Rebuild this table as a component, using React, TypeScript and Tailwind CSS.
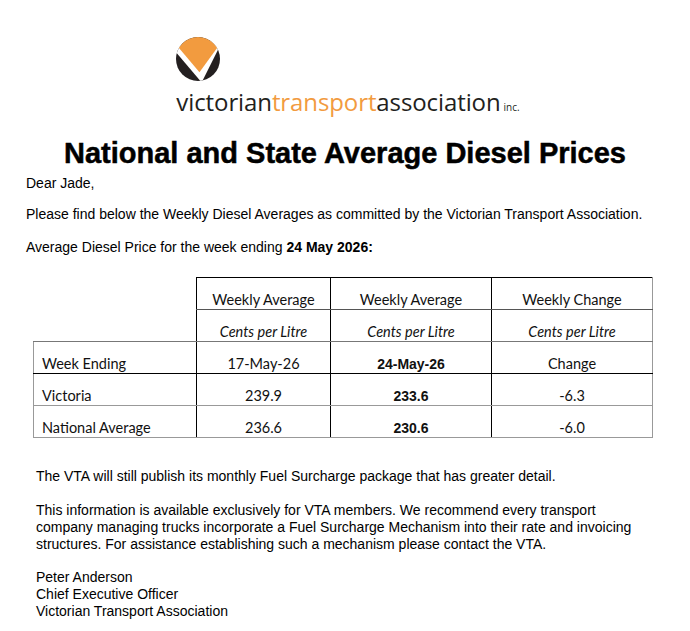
import React from "react";

const ARIAL = { fontFamily: '"Liberation Sans", Arial, sans-serif' };

function Logo() {
  return (
    <div className="flex justify-center pl-[6px]">
      <div className="flex flex-col items-start">
        <svg width="44" height="44" viewBox="0 0 120 120" className="block">
          <defs>
            <clipPath id="vta-circle">
              <circle cx="60" cy="60" r="60" />
            </clipPath>
          </defs>
          <g clipPath="url(#vta-circle)">
            <rect width="120" height="120" fill="#231f20" />
            <polygon points="-10,30 70,124 130,4" fill="#ffffff" />
            <polygon points="-10,0 130,0 130,5 64,96 -10,9" fill="#f29b3f" />
          </g>
        </svg>
        <div
          className="mt-[7px] flex items-baseline text-[24px] leading-[28px] tracking-[-0.1px] text-[#231f20]"
          style={{ fontFamily: '"Open Sans", sans-serif' }}
        >
          <span>victorian</span>
          <span className="text-[#f29b3f]">transport</span>
          <span>association</span>
          <span className="ml-[3px] text-[10px] tracking-normal">inc.</span>
        </div>
      </div>
    </div>
  );
}

export default function App() {
  const rows = [
    { label: "Week Ending", prev: "17-May-26", curr: "24-May-26", change: "Change" },
    { label: "Victoria", prev: "239.9", curr: "233.6", change: "-6.3" },
    { label: "National Average", prev: "236.6", curr: "230.6", change: "-6.0" },
  ];

  return (
    <div className="min-h-screen w-[690px] bg-white pt-[37px] text-black" style={ARIAL}>
      <Logo />

      <h1 className="mt-[15px] text-center text-[29px] font-bold leading-[34px] [-webkit-text-stroke:0.5px_black]">
        National and State Average Diesel Prices
      </h1>

      <div className="mt-[5px] pl-[26px] text-[14px] leading-[16px]">
        <p>Dear Jade,</p>
        <p className="mt-[15px]">
          Please find below the Weekly Diesel Averages as committed by the Victorian Transport Association.
        </p>
        <p className="mt-[17px]">
          Average Diesel Price for the week ending <b>24 May 2026:</b>
        </p>
      </div>

      <table
        className="ml-[33px] mt-[22px] border-collapse text-[14.5px] leading-[16px] text-[#111]"
        style={{ fontFamily: "Lato, sans-serif" }}
      >
        <colgroup>
          <col className="w-[163px]" />
          <col className="w-[134px]" />
          <col className="w-[161px]" />
          <col className="w-[161px]" />
        </colgroup>
        <tbody>
          <tr className="h-[32px]">
            <td />
            <td className="border border-b-[#555] border-l-black border-r-black border-t-black pb-[1px] text-center align-bottom">
              Weekly Average
            </td>
            <td className="border border-b-[#555] border-r-black border-t-black pb-[1px] text-center align-bottom">
              Weekly Average
            </td>
            <td className="border border-b-[#555] border-r-[#999] border-t-black pb-[1px] text-center align-bottom">
              Weekly Change
            </td>
          </tr>
          <tr className="h-[32px]">
            <td className="border-b border-b-[#777]" />
            <td className="border border-b-[#777] border-l-black border-r-black pb-[1px] text-center align-bottom italic">
              Cents per Litre
            </td>
            <td className="border border-b-[#777] border-r-black pb-[1px] text-center align-bottom italic">
              Cents per Litre
            </td>
            <td className="border border-b-[#777] border-r-[#999] pb-[1px] text-center align-bottom italic">
              Cents per Litre
            </td>
          </tr>
          {rows.map((r, i) => (
            <tr key={r.label} className="h-[32px]">
              <td
                className={`border border-l-[#999] border-r-black pb-[1px] pl-[8px] align-bottom ${
                  i === 0 ? "border-b-black" : "border-b-[#999]"
                }`}
              >
                {r.label}
              </td>
              <td
                className={`border border-r-black pb-[1px] text-center align-bottom ${
                  i === 0 ? "border-b-black" : "border-b-[#999]"
                }`}
              >
                {r.prev}
              </td>
              <td
                className={`border border-r-black pb-[1px] text-center align-bottom text-[14px] font-bold ${
                  i === 0 ? "border-b-black" : "border-b-[#999]"
                }`}
                style={ARIAL}
              >
                {r.curr}
              </td>
              <td
                className={`border border-r-[#999] pb-[1px] text-center align-bottom ${
                  i === 0 ? "border-b-black" : "border-b-[#999]"
                }`}
              >
                {r.change}
              </td>
            </tr>
          ))}
        </tbody>
      </table>

      <div className="mt-[30px] pl-[36px] text-[14px] leading-[17px]">
        <p>The VTA will still publish its monthly Fuel Surcharge package that has greater detail.</p>
        <p className="mt-[17px] whitespace-nowrap">
          This information is available exclusively for VTA members. We recommend every transport
          <br />
          company managing trucks incorporate a Fuel Surcharge Mechanism into their rate and invoicing
          <br />
          structures. For assistance establishing such a mechanism please contact the VTA.
        </p>
        <p className="mt-[16px]">
          Peter Anderson
          <br />
          Chief Executive Officer
          <br />
          Victorian Transport Association
        </p>
      </div>
    </div>
  );
}
